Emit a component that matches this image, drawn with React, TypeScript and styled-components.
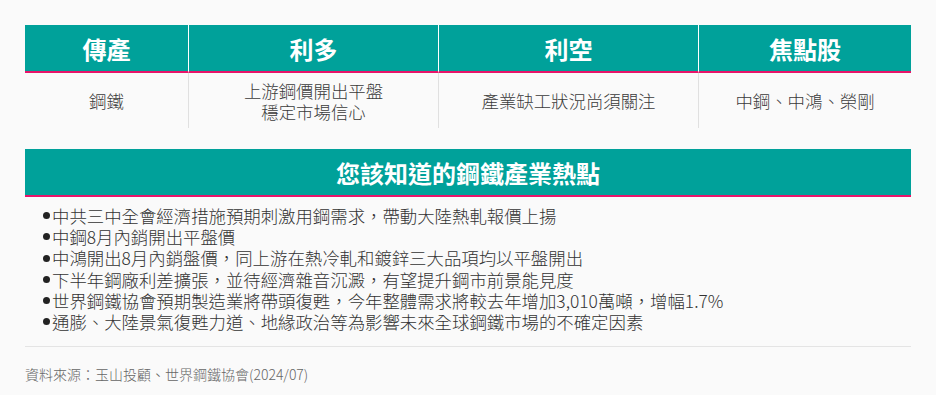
import React from "react";
import styled, { createGlobalStyle } from "styled-components";

const Global = createGlobalStyle`
  html, body { margin: 0; padding: 0; background: #fafafa; }
  body { font-family: "Noto Sans CJK TC", "Noto Sans", sans-serif; color: #333; }
`;

const TEAL = "#00a19a";
const PINK = "#e8146a";

const Page = styled.div`
  padding: 25px 25px 0 25px;
  width: 886px;
`;

const Table = styled.div`
  display: grid;
  grid-template-columns: 164px 250px 260px 1fr;
`;

const HeadCell = styled.div<{ $last?: boolean }>`
  background: ${TEAL};
  color: #fff;
  height: 46px;
  display: flex;
  align-items: center;
  justify-content: center;
  font-size: 24px;
  font-weight: 700;
  border-bottom: 2px solid ${PINK};
  border-right: ${(p) => (p.$last ? "none" : "1px solid #fff")};
`;

const BodyCell = styled.div<{ $last?: boolean }>`
  height: 55px;
  display: flex;
  flex-direction: column;
  align-items: center;
  justify-content: center;
  font-size: 17.4px;
  font-weight: 300;
  line-height: 21px;
  color: #3a3a3a;
  text-align: center;
  border-right: ${(p) => (p.$last ? "none" : "1px solid #e0e0e0")};
`;

const Section = styled.section`
  margin-top: 21px;
`;

const TitleBar = styled.h2`
  margin: 0;
  height: 46px;
  background: ${TEAL};
  border-bottom: 2px solid ${PINK};
  color: #fff;
  font-size: 24px;
  font-weight: 700;
  display: flex;
  align-items: center;
  justify-content: center;
`;

const List = styled.ul`
  list-style: none;
  margin: 0;
  padding: 8px 0 14px 17px;
  border-bottom: 1px solid #e4e4e4;
`;

const Item = styled.li`
  font-size: 17.4px;
  font-weight: 300;
  line-height: 21.2px;
  color: #333;
  display: flex;
  align-items: center;
`;

const Dot = styled.span`
  display: inline-block;
  width: 7px;
  height: 7px;
  border-radius: 50%;
  background: #222;
  margin-right: 2px;
  margin-left: 1px;
`;

const Source = styled.p`
  margin: 0;
  padding-top: 17px;
  font-size: 14px;
  font-weight: 300;
  color: #666;
`;

const heads = ["傳產", "利多", "利空", "焦點股"];
const points = [
  "中共三中全會經濟措施預期刺激用鋼需求，帶動大陸熱軋報價上揚",
  "中鋼8月內銷開出平盤價",
  "中鴻開出8月內銷盤價，同上游在熱冷軋和鍍鋅三大品項均以平盤開出",
  "下半年鋼廠利差擴張，並待經濟雜音沉澱，有望提升鋼市前景能見度",
  "世界鋼鐵協會預期製造業將帶頭復甦，今年整體需求將較去年增加3,010萬噸，增幅1.7%",
  "通膨、大陸景氣復甦力道、地緣政治等為影響未來全球鋼鐵市場的不確定因素",
];

export default function App() {
  return (
    <>
      <Global />
      <Page>
        <Table>
          {heads.map((h, i) => (
            <HeadCell key={h} $last={i === heads.length - 1}>
              {h}
            </HeadCell>
          ))}
          <BodyCell>鋼鐵</BodyCell>
          <BodyCell>
            <span>上游鋼價開出平盤</span>
            <span>穩定市場信心</span>
          </BodyCell>
          <BodyCell>產業缺工狀況尚須關注</BodyCell>
          <BodyCell $last>中鋼、中鴻、榮剛</BodyCell>
        </Table>
        <Section>
          <TitleBar>您該知道的鋼鐵產業熱點</TitleBar>
          <List>
            {points.map((p) => (
              <Item key={p}>
                <Dot />
                {p}
              </Item>
            ))}
          </List>
          <Source>資料來源：玉山投顧、世界鋼鐵協會(2024/07)</Source>
        </Section>
      </Page>
    </>
  );
}
